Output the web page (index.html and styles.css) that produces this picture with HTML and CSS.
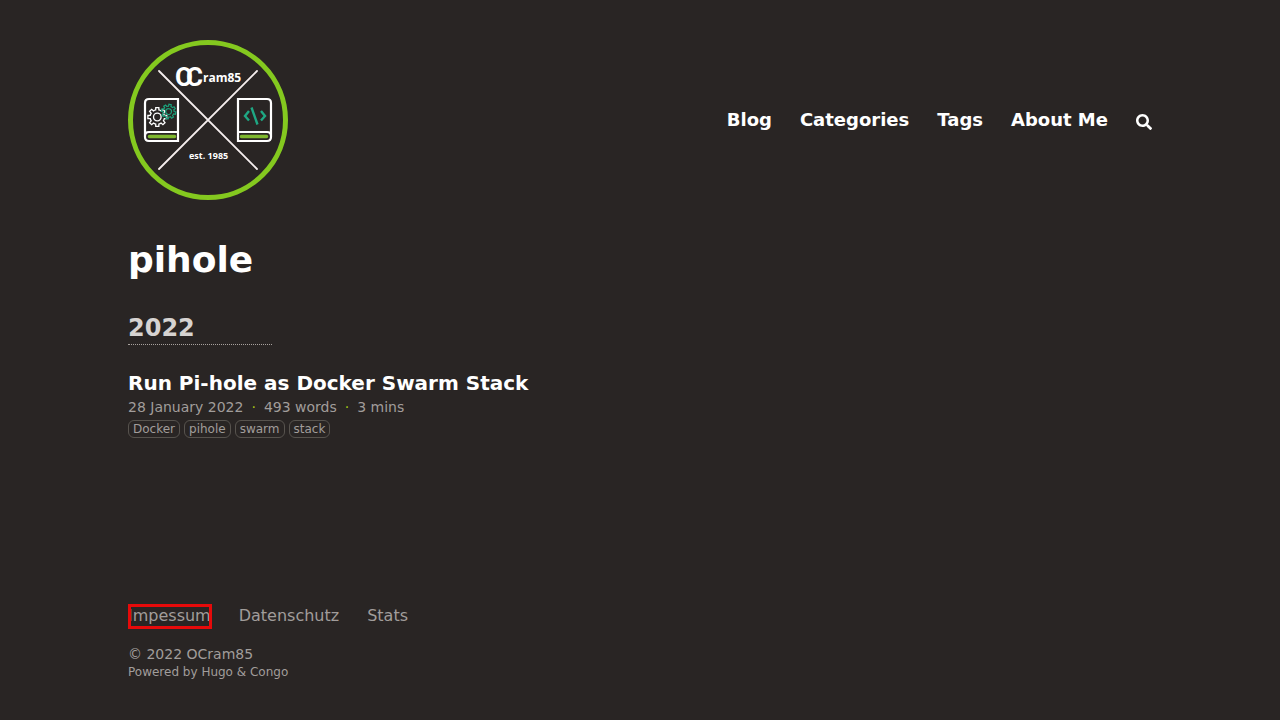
FILE: index.html
```html
<!DOCTYPE html>
<html lang="en">
<head>
<meta charset="utf-8">
<meta name="viewport" content="width=device-width, initial-scale=1">
<title>pihole</title>
<link rel="stylesheet" href="styles.css">
</head>
<body>
<header class="site-header">
  <a class="logo" href="#" aria-label="OCram85">
    <svg viewBox="0 0 160 160" width="160" height="160" fill="none">
      <defs>
        <path id="gear" d="M7.4-1.7 9.9-1.6 9.9 1.6 7.4 1.7A7.6 7.6 0 0 1 6.4 4L8.1 5.9 5.9 8.1 4 6.4A7.6 7.6 0 0 1 1.7 7.4L1.6 9.9-1.6 9.9-1.7 7.4A7.6 7.6 0 0 1-4 6.4L-5.9 8.1-8.1 5.9-6.4 4A7.6 7.6 0 0 1-7.4 1.7L-9.9 1.6-9.9-1.6-7.4-1.7A7.6 7.6 0 0 1-6.4-4L-8.1-5.9-5.9-8.1-4-6.4A7.6 7.6 0 0 1-1.7-7.4L-1.6-9.9 1.6-9.9 1.7-7.4A7.6 7.6 0 0 1 4-6.4L5.9-8.1 8.1-5.9 6.4-4A7.6 7.6 0 0 1 7.4-1.7ZM4 0A4 4 0 1 1-4 0 4 4 0 0 1 4 0Z"/>
      </defs>
      <circle cx="80" cy="80" r="77.5" stroke="#84c91f" stroke-width="5"/>
      <path d="M31 31 129 129M129 31 31 129" stroke="#f5eeee" stroke-width="1.8" stroke-linecap="round"/>
      <g stroke="#fff" stroke-width="2.2">
        <path d="M50 59H21Q17 59 17 63V97Q17 101 21 101H50ZM17 96Q17 92 21 92H50"/>
        <path d="M110 59H139Q143 59 143 63V97Q143 101 139 101H110ZM143 96Q143 92 139 92H110"/>
      </g>
      <path d="M21.500 96.500H46.500M113.500 96.500H138.500" stroke="#7fb82f" stroke-width="3.600" stroke-linecap="round"/>
      <use href="#gear" transform="translate(29.3 77)scale(.95)" stroke="#fff" stroke-width="1.4"/>
      <use href="#gear" transform="translate(40.6 71.6)rotate(12)scale(.73)" stroke="#1aa37c" stroke-width="1.6"/>
      <path d="M121 71 117 76 121 80.5M133 71 137 76 133 80.5M123.500 67.5 129.5 84.5" stroke="#1fa783" stroke-width="2.400"/>
      <g fill="#fff">
        <text class="mark" x="47 58" y="46" font-size="26">OC</text>
        <text class="word" x="75" y="42" font-size="12">ram85</text>
        <text class="word" x="61" y="119" font-size="9">est. 1985</text>
      </g>
    </svg>
  </a>
  <nav class="main-nav" aria-label="Main">
    <a href="#">Blog</a>
    <a href="#">Categories</a>
    <a href="#">Tags</a>
    <a href="#">About Me</a>
    <button class="search" type="button" aria-label="Search">
      <svg viewBox="0 0 512 512" width="16" height="16" fill="currentColor"><path d="M505 442.700 405.300 343c-4.500-4.500-10.600-7-17-7H372c27.600-35.300 44-79.700 44-128C416 93.100 322.900 0 208 0S0 93.100 0 208s93.100 208 208 208c48.300 0 92.700-16.400 128-44v16.300c0 6.400 2.500 12.500 7 17l99.700 99.700c9.400 9.400 24.600 9.400 33.900 0l28.300-28.300c9.400-9.400 9.400-24.600.1-34zM208 336c-70.700 0-128-57.200-128-128 0-70.700 57.200-128 128-128 70.700 0 128 57.200 128 128 0 70.700-57.200 128-128 128z"/></svg>
    </button>
  </nav>
</header>
<main>
  <h1>pihole</h1>
  <h2>2022</h2>
  <hr class="rule">
  <article>
    <h3><a href="#">Run Pi-hole as Docker Swarm Stack</a></h3>
    <p class="meta"><time datetime="2022-01-28">28 January 2022</time><span class="dot">·</span><span>493 words</span><span class="dot">·</span><span>3 mins</span></p>
    <div class="tags"><a href="#">Docker</a><a href="#">pihole</a><a href="#">swarm</a><a href="#">stack</a></div>
  </article>
</main>
<footer>
  <nav class="footer-nav" aria-label="Footer">
    <a class="marked" href="#">Impessum</a>
    <a href="#">Datenschutz</a>
    <a href="#">Stats</a>
  </nav>
  <p class="copyright">© 2022 OCram85</p>
  <p class="powered">Powered by <a href="#">Hugo</a> &amp; <a href="#">Congo</a></p>
</footer>
</body>
</html>
```
FILE: styles.css
```css
* { box-sizing: border-box; margin: 0; }
body {
  display: flex;
  flex-direction: column;
  min-height: 100vh;
  padding: 40px 10%;
  background: #292524;
  color: #a19d9b;
  font: 16px/24px "DejaVu Sans", sans-serif;
}
a { color: inherit; text-decoration: none; }
.site-header {
  display: flex;
  align-items: center;
  justify-content: space-between;
  gap: 24px;
}
.logo svg { display: block; }
.mark { font-family: Roboto, sans-serif; font-weight: 700; }
.word { font-family: "Open Sans", sans-serif; font-weight: 700; }
.main-nav {
  display: flex;
  flex-wrap: wrap;
  align-items: center;
  gap: 28px;
  color: #fff;
  font-size: 18px;
  line-height: 28px;
  font-weight: 700;
}
.search {
  display: flex;
  padding: 4px 0 0;
  border: 0;
  background: none;
  color: inherit;
}
main { flex: 1; }
h1 {
  margin-top: 40px;
  color: #fff;
  font-size: 36px;
  line-height: 40px;
}
h2 {
  margin-top: 32px;
  color: #d6d3d1;
  font-size: 24px;
  line-height: 32px;
}
.rule {
  width: 144px;
  border: 0;
  border-top: 1px dotted #a8a29e;
}
article { margin-top: 24px; }
h3 {
  color: #fff;
  font-size: 20px;
  line-height: 28px;
}
.meta { font-size: 14px; line-height: 20px; }
.dot { padding: 0 8px; color: #a3c414; }
.tags {
  display: flex;
  flex-wrap: wrap;
  gap: 4px;
  margin-top: 3px;
  font-size: 12px;
  line-height: 16px;
}
.tags a {
  padding: 0 4px;
  border: 1px solid #57534e;
  border-radius: 6px;
}
.footer-nav {
  display: flex;
  flex-wrap: wrap;
  gap: 28px;
  margin-bottom: 16px;
}
.marked { position: relative; }
.marked::after {
  content: "";
  position: absolute;
  inset: 0 -1px -1px 0;
  border: 3px solid #e60a0a;
}
.copyright { font-size: 14px; line-height: 20px; }
.powered { font-size: 12px; line-height: 16px; }
```
